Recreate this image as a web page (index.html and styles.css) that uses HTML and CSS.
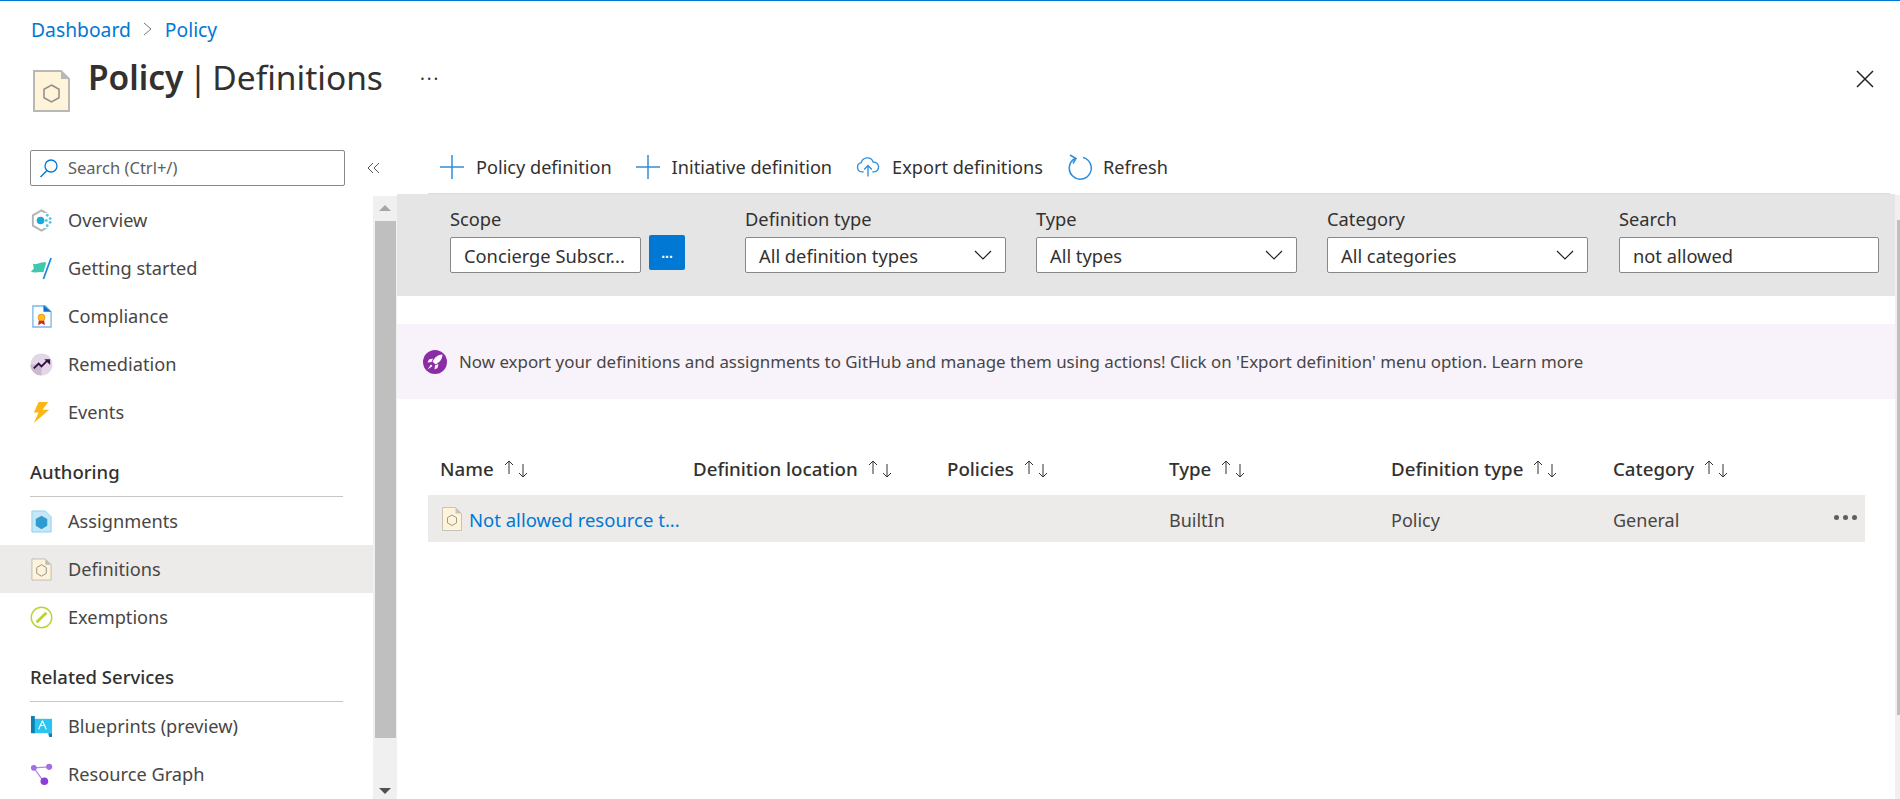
FILE: index.html
```html
<!DOCTYPE html>
<html lang="en">

<head>
    <title>Policy | Definitions</title>
    <link rel="stylesheet" href="styles.css">
</head>

<body>
    <div class="crumbs">
        <a class="crumb">Dashboard</a>
        <svg class="crumb_sep" width="12" height="16" viewBox="0 0 12 16"><path d="M2 2l7 6-7 6" fill="none" stroke="#777" stroke-width="1"/></svg>
        <a class="crumb">Policy</a>
    </div>
    <div class="header">
        <svg class="header_icon" width="37" height="42" viewBox="0 0 37 42">
            <path d="M1 1h27l8 8v32H1z" fill="#fff4da" stroke="#b8b8b4" stroke-width="2"/>
            <path d="M28 1v8h8z" fill="#b8b8b4"/>
            <path d="M18.500 15l7.500 4.300v8.400L18.500 32 11 27.700v-8.400z" fill="none" stroke="#8f8f88" stroke-width="1.500"/>
        </svg>
        <h1 class="title"><b>Policy</b> | Definitions</h1>
        <span class="title_more">...</span>
        <svg class="close" width="18" height="18" viewBox="0 0 18 18"><path d="M1 1l16 16M17 1L1 17" stroke="#222" stroke-width="1.500"/></svg>
    </div>

    <div class="page">
        <div class="side">
            <div class="side_top">
                <div class="side_search">
                    <svg width="20" height="20" viewBox="0 0 20 20"><circle cx="12" cy="8" r="6" fill="none" stroke="#0078d4" stroke-width="1.300"/><path d="M8 12.500L1.500 19" stroke="#0078d4" stroke-width="1.500"/></svg>
                    <span class="side_search_text">Search (Ctrl+/)</span>
                </div>
                <svg class="collapse" width="14" height="12" viewBox="0 0 14 12"><path d="M6 1L1 6l5 5M12 1L7 6l5 5" fill="none" stroke="#555" stroke-width="1"/></svg>
            </div>
            <div class="side_body">
                <div class="nav">
                    <div class="nav_item">
                        <svg class="nav_icon" viewBox="0 0 24 24"><path d="M12 1.500l9 5.200v10.600l-9 5.200-9-5.200V6.700z" fill="none" stroke="#b4b4b4" stroke-width="2"/><rect x="15" y="4" width="9" height="16" fill="#fff"/><circle cx="11" cy="12" r="4" fill="#1ea7dc"/><circle cx="18" cy="6.500" r="1.500" fill="#50c8ee"/><circle cx="21" cy="10" r="1.500" fill="#50c8ee"/><circle cx="21" cy="14" r="1.500" fill="#50c8ee"/><circle cx="18" cy="17.500" r="1.500" fill="#50c8ee"/><circle cx="17" cy="12" r="1.500" fill="#50c8ee"/></svg>
                        Overview
                    </div>
                    <div class="nav_item">
                        <svg class="nav_icon" viewBox="0 0 24 24"><path d="M3 7c5 2 8-3 14-1l-3 10c-4-1-8 1-13-.500l3-3.500z" fill="#3dc9ad"/><path d="M22 1l-8 22" stroke="#1a86e0" stroke-width="1.800"/></svg>
                        Getting started
                    </div>
                    <div class="nav_item">
                        <svg class="nav_icon" viewBox="0 0 24 24"><path d="M3 1h13l6 6v16H3z" fill="#fff" stroke="#7ab8ec" stroke-width="1.400"/><path d="M14 0l8 7h-8z" fill="#0f6fc6"/><path d="M9.500 14l-1 7 3.500-2 3.500 2-1-7z" fill="#c8281e"/><circle cx="12" cy="13" r="3.500" fill="#fcc419" stroke="#e8951a"/></svg>
                        Compliance
                    </div>
                    <div class="nav_item">
                        <svg class="nav_icon" viewBox="0 0 24 24"><circle cx="12" cy="12" r="11.500" fill="#e3d6e6"/><path d="M12 12L.500 12A11.500 11.500 0 0 0 12 23.500z" fill="#cdb8d2"/><path d="M4 16l5-5 3 3 6-6" fill="none" stroke="#32103f" stroke-width="2"/><path d="M15 6.500h6v6z" fill="#32103f"/></svg>
                        Remediation
                    </div>
                    <div class="nav_item">
                        <svg class="nav_icon" viewBox="0 0 24 24"><path d="M9 1h10l-6 8h7L4 23l5-11H4z" fill="#fcb714"/></svg>
                        Events
                    </div>
                </div>
                <div class="nav_group">Authoring</div>
                <div class="nav">
                    <div class="nav_item">
                        <svg class="nav_icon" viewBox="0 0 24 24"><path d="M2 1h14l6 6v16H2z" fill="#c6e8f6" stroke="#8fd0ec"/><path d="M12 6l6 3.500v7L12 20l-6-3.500v-7z" fill="#2f9bd0"/></svg>
                        Assignments
                    </div>
                    <div class="nav_item nav_item_active">
                        <svg class="nav_icon" viewBox="0 0 24 24"><path d="M2 1h14l6 6v16H2z" fill="#fff4da" stroke="#bcbcb6"/><path d="M16 1v6h6z" fill="#bcbcb6"/><path d="M12 7l5 3v6l-5 3-5-3v-6z" fill="none" stroke="#8f8f88"/></svg>
                        Definitions
                    </div>
                    <div class="nav_item">
                        <svg class="nav_icon" viewBox="0 0 24 24"><circle cx="12" cy="12" r="10.700" fill="#fff" stroke="#b7d52c" stroke-width="1.500"/><path d="M7 17L17 7" stroke="#b7d52c" stroke-width="3"/></svg>
                        Exemptions
                    </div>
                </div>
                <div class="nav_group">Related Services</div>
                <div class="nav">
                    <div class="nav_item">
                        <svg class="nav_icon" viewBox="0 0 24 24"><path d="M3 4h20v15H3z" fill="#2bc4f0"/><path d="M1 1h4v18H1z" fill="#0f80b0"/><path d="M19 19h4v4h-3z" fill="#0f80b0"/><path d="M13 6l-4 9M13 6l4 9M10 11h6" stroke="#fff" stroke-width="1.200" fill="none"/></svg>
                        Blueprints (preview)
                    </div>
                    <div class="nav_item">
                        <svg class="nav_icon" viewBox="0 0 24 24"><path d="M4 5l10 14M20 4L4 5" stroke="#b088e8" stroke-width="1.300" fill="none"/><circle cx="4" cy="5" r="3" fill="#a26ee4"/><circle cx="20" cy="4" r="3.200" fill="#a26ee4"/><circle cx="15" cy="19" r="4" fill="#8a3fd8"/></svg>
                        Resource Graph
                    </div>
                </div>
            </div>
        </div>
        <div class="side_scroll">
            <div class="arrow_up"></div>
            <div class="side_thumb"></div>
            <div class="arrow_down"></div>
        </div>

        <div class="main">
            <div class="toolbar">
                <div class="tool">
                    <svg width="24" height="24" viewBox="0 0 24 24"><path d="M12 0v24M0 12h24" stroke="#2f8fdc" stroke-width="1.500"/></svg>
                    Policy definition
                </div>
                <div class="tool">
                    <svg width="24" height="24" viewBox="0 0 24 24"><path d="M12 0v24M0 12h24" stroke="#2f8fdc" stroke-width="1.500"/></svg>
                    Initiative definition
                </div>
                <div class="tool">
                    <svg width="24" height="20" viewBox="0 0 25 20"><path d="M8 15H6a4.800 4.800 0 0 1-.5-9.500A6.500 6.500 0 0 1 18 5a5 5 0 0 1 1 10h-2" fill="none" stroke="#2f8fdc" stroke-width="1.400"/><path d="M12.500 20V9M8.500 12.500l4-4 4 4" fill="none" stroke="#2f8fdc" stroke-width="1.400"/></svg>
                    Export definitions
                </div>
                <div class="tool tool_refresh">
                    <svg width="26" height="26" viewBox="0 0 26 26"><path d="M8 4.500a11 11 0 1 0 8-1" fill="none" stroke="#2f8fdc" stroke-width="1.500"/><path d="M3 1l6 3.500-3 5" fill="none" stroke="#2f8fdc" stroke-width="1.500"/></svg>
                    Refresh
                </div>
            </div>

            <div class="filters">
                <div class="field field_scope">
                    <label>Scope</label>
                    <div class="scope_row">
                        <div class="box box_scope">Concierge Subscr...</div>
                        <button class="scope_btn">...</button>
                    </div>
                </div>
                <div class="field field_def">
                    <label>Definition type</label>
                    <div class="box box_select">All definition types
                        <svg width="18" height="10" viewBox="0 0 18 10"><path d="M1 1l8 8 8-8" fill="none" stroke="#222" stroke-width="1.200"/></svg>
                    </div>
                </div>
                <div class="field field_def">
                    <label>Type</label>
                    <div class="box box_select">All types
                        <svg width="18" height="10" viewBox="0 0 18 10"><path d="M1 1l8 8 8-8" fill="none" stroke="#222" stroke-width="1.200"/></svg>
                    </div>
                </div>
                <div class="field field_def">
                    <label>Category</label>
                    <div class="box box_select">All categories
                        <svg width="18" height="10" viewBox="0 0 18 10"><path d="M1 1l8 8 8-8" fill="none" stroke="#222" stroke-width="1.200"/></svg>
                    </div>
                </div>
                <div class="field field_search">
                    <label>Search</label>
                    <div class="box box_search">not allowed</div>
                </div>
            </div>

            <div class="banner">
                <svg width="24" height="24" viewBox="0 0 24 24"><circle cx="12" cy="12" r="12" fill="#8a2da5"/><path d="M19.500 4.500c-4.500 .200-7.500 2.500-10 7l3 3c4.500-2.500 6.800-5.500 7-10z" fill="#fff"/><path d="M10 8.500l-4 1-1.500 3 4-.5zM15.500 14l-1 4-3 1.500 .5-4zM8 14.500l-3.500 5 5-3.500z" fill="#fff"/></svg>
                <span>Now export your definitions and assignments to GitHub and manage them using actions! Click on 'Export definition' menu option. Learn more</span>
            </div>

            <div class="table">
                <div class="row row_head">
                    <div class="cell cell_name">Name <svg class="sort" width="26" height="18" viewBox="0 0 26 18"><path d="M6 14V1M2 5l4-4 4 4M20 4v13M16 13l4 4 4-4" fill="none" stroke="#323130" stroke-width="1"/></svg></div>
                    <div class="cell cell_loc">Definition location <svg class="sort" width="26" height="18" viewBox="0 0 26 18"><path d="M6 14V1M2 5l4-4 4 4M20 4v13M16 13l4 4 4-4" fill="none" stroke="#323130" stroke-width="1"/></svg></div>
                    <div class="cell cell_pol">Policies <svg class="sort" width="26" height="18" viewBox="0 0 26 18"><path d="M6 14V1M2 5l4-4 4 4M20 4v13M16 13l4 4 4-4" fill="none" stroke="#323130" stroke-width="1"/></svg></div>
                    <div class="cell cell_type">Type <svg class="sort" width="26" height="18" viewBox="0 0 26 18"><path d="M6 14V1M2 5l4-4 4 4M20 4v13M16 13l4 4 4-4" fill="none" stroke="#323130" stroke-width="1"/></svg></div>
                    <div class="cell cell_def">Definition type <svg class="sort" width="26" height="18" viewBox="0 0 26 18"><path d="M6 14V1M2 5l4-4 4 4M20 4v13M16 13l4 4 4-4" fill="none" stroke="#323130" stroke-width="1"/></svg></div>
                    <div class="cell cell_cat">Category <svg class="sort" width="26" height="18" viewBox="0 0 26 18"><path d="M6 14V1M2 5l4-4 4 4M20 4v13M16 13l4 4 4-4" fill="none" stroke="#323130" stroke-width="1"/></svg></div>
                </div>
                <div class="row row_item">
                    <div class="cell cell_name">
                        <svg class="row_icon" width="20" height="24" viewBox="0 0 20 24"><path d="M.500.500h13l6 6v17H.500z" fill="#fff4da" stroke="#c4c4bc"/><path d="M13.500.500v6h6z" fill="#c4c4bc"/><path d="M10 8l4.500 2.600v5.300L10 18.500l-4.500-2.600v-5.300z" fill="none" stroke="#9a9a90"/></svg>
                        <a class="row_link">Not allowed resource t...</a>
                    </div>
                    <div class="cell cell_loc"></div>
                    <div class="cell cell_pol"></div>
                    <div class="cell cell_type">BuiltIn</div>
                    <div class="cell cell_def">Policy</div>
                    <div class="cell cell_cat">General</div>
                    <div class="row_more"><i></i><i></i><i></i></div>
                </div>
            </div>
        </div>
        <div class="main_scroll">
            <div class="main_thumb"></div>
        </div>
    </div>
</body>

</html>
```

FILE: styles.css
```css
* {
    margin: 0;
    padding: 0;
    box-sizing: border-box;
}

body {
    font-family: "Noto Sans", "Open Sans", sans-serif;
    color: #323130;
    background-color: white;
    height: 799px;
    overflow: hidden;
    border-top: 1px solid #0078d4;
}

.crumbs {
    display: flex;
    align-items: center;
    height: 47px;
    padding: 9px 0 0 31px;
    font-size: 19.3px;
    color: #0078d4;
}

.crumb_sep {
    margin: 0 11px 0 11px;
}

.header {
    display: flex;
    height: 66px;
    padding-left: 33px;
}

.header_icon {
    margin-top: 22px;
}

.title {
    font-size: 33.5px;
    font-weight: 400;
    line-height: 46px;
    margin-left: 18px;
    margin-top: 6px;
    word-spacing: -3.5px;
}

.title b {
    font-weight: 600;
}

.title_more {
    font-size: 18px;
    letter-spacing: 2px;
    margin-left: 37px;
    margin-top: 13px;
}

.close {
    margin-left: auto;
    margin-right: 26px;
    margin-top: 22px;
}

.page {
    display: flex;
    height: 685px;
}

.side {
    width: 373px;
    flex-shrink: 0;
}

.side_top {
    display: flex;
    align-items: center;
    height: 82px;
    padding: 36px 0 10px 30px;
}

.side_search {
    display: flex;
    align-items: center;
    flex-shrink: 0;
    gap: 9px;
    width: 315px;
    height: 36px;
    border: 1px solid #8a8886;
    border-radius: 2px;
    padding-left: 8px;
    font-size: 16.5px;
    color: #605e5c;
}

.side_search_text {
    margin-top: -2px;
}

.collapse {
    flex-shrink: 0;
    margin-left: 22px;
}

.side_body {
    font-size: 18.2px;
}

.nav_item {
    display: flex;
    align-items: center;
    gap: 15px;
    height: 48px;
    padding-left: 30px;
    color: #484644;
}

.nav_item_active {
    background-color: #edebe9;
}

.nav_icon {
    width: 23px;
    height: 23px;
}

.nav_group {
    margin: 13px 30px 0;
    width: 313px;
    height: 48px;
    line-height: 46px;
    font-size: 18.5px;
    font-weight: 500;
    border-bottom: 1px solid #c8c6c4;
}

.side_scroll {
    width: 24px;
    flex-shrink: 0;
    display: flex;
    flex-direction: column;
    align-items: center;
    margin-top: 82px;
    background-color: #f0f0f0;
    height: 603px;
}

.arrow_up {
    width: 0;
    height: 0;
    border-left: 6px solid transparent;
    border-right: 6px solid transparent;
    border-bottom: 6px solid #a6a6a6;
    margin-top: 9px;
}

.side_thumb {
    width: 21px;
    height: 217px;
    flex-grow: 1;
    background-color: #bfbfbf;
    margin: 10px 0 50px;
}

.arrow_down {
    width: 0;
    height: 0;
    border-left: 6px solid transparent;
    border-right: 6px solid transparent;
    border-top: 6px solid #505050;
    margin-bottom: 5px;
}

.main {
    flex-grow: 1;
    font-size: 18.3px;
}

.toolbar {
    display: flex;
    align-items: center;
    height: 80px;
    margin: 0 5px 0 31px;
    padding: 26px 0 0 12px;
    border-bottom: 1px solid #dcdcdc;
    gap: 24px;
    font-size: 18.15px;
}

.tool {
    display: flex;
    align-items: center;
    gap: 12px;
}

.tool_refresh {
    gap: 10px;
}

.filters {
    display: flex;
    background-color: #e5e5e5;
    height: 102px;
    padding: 12px 0 0 53px;
}

.field label {
    display: block;
    height: 31px;
    line-height: 26px;
}

.field_scope {
    width: 295px;
}

.field_def {
    width: 291px;
}

.field_search {
    margin-left: 1px;
}

.scope_row {
    display: flex;
    gap: 8px;
    align-items: flex-start;
}

.box {
    display: flex;
    align-items: center;
    justify-content: space-between;
    height: 36px;
    background-color: white;
    border: 1px solid #8a8886;
    border-radius: 2px;
    padding: 0 13px;
    white-space: nowrap;
}

.box_scope {
    width: 191px;
    padding-right: 0;
}

.box_select {
    width: 261px;
}

.box_search {
    width: 260px;
}

.scope_btn {
    width: 36px;
    height: 35px;
    margin-top: -2px;
    background-color: #0078d4;
    color: white;
    border: none;
    border-radius: 2px;
    font-weight: 700;
    font-size: 14px;
}

.banner {
    display: flex;
    align-items: center;
    gap: 12px;
    background-color: #f8f3fb;
    height: 75px;
    margin-top: 28px;
    padding-left: 26px;
    font-size: 16.9px;
    color: #484644;
}

.table {
    margin: 43px 30px 0 31px;
}

.row {
    display: flex;
    align-items: center;
    height: 47px;
    padding-left: 12px;
}

.row_head {
    font-size: 18.7px;
    font-weight: 500;
    height: 53px;
}

.row_item {
    background-color: #ecebe9;
    color: #484644;
    font-size: 18px;
    padding-top: 2px;
}

.cell {
    display: flex;
    align-items: center;
    white-space: nowrap;
}

.sort {
    margin-left: 9px;
}

.cell_name { width: 253px; }
.cell_loc { width: 254px; }
.cell_pol { width: 222px; }
.cell_type { width: 222px; }
.cell_def { width: 222px; }
.cell_cat { width: 200px; }

.row_icon {
    margin: -2px 7px 0 2px;
}

.row_link {
    color: #0078d4;
    font-size: 18.5px;
}

.row_more {
    display: flex;
    gap: 4px;
    margin-left: auto;
    margin-right: 8px;
    margin-top: -4px;
}

.row_more i {
    width: 5px;
    height: 5px;
    border-radius: 50%;
    background-color: #605e5c;
}

.main_scroll {
    width: 5px;
    flex-shrink: 0;
    margin-top: 81px;
    padding: 25px 0 0 2px;
    background-color: #f0f0f0;
}

.main_thumb {
    height: 495px;
    background-color: #bfbfbf;
}
```
